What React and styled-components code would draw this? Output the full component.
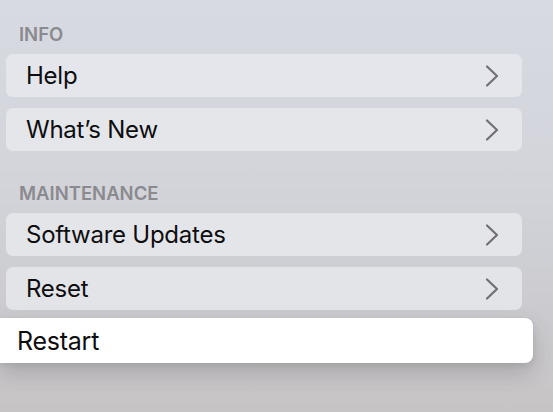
import React from "react";
import styled, { createGlobalStyle } from "styled-components";

const GlobalStyle = createGlobalStyle`
  html, body {
    margin: 0;
    padding: 0;
    height: 100%;
  }
  body {
    background: linear-gradient(180deg, #d7dae1 0%, #d2d4da 45%, #cbcbcf 75%, #c7c4c5 100%);
    font-family: Inter, "Liberation Sans", Arial, sans-serif;
    overflow: hidden;
  }
`;

const Page = styled.div`
  width: 553px;
  height: 412px;
  padding: 22px 31px 0 6px;
  box-sizing: border-box;
  display: flex;
  flex-direction: column;
`;

const Section = styled.section`
  display: flex;
  flex-direction: column;
  margin-bottom: ${(p) => p.$after || 0}px;
`;

const Header = styled.div`
  padding-left: 13px;
  height: 24px;
  line-height: 24px;
  margin-bottom: 8px;
  font-size: 18.5px;
  font-weight: 600;
  color: #8a8a8f;
`;

const List = styled.div`
  display: flex;
  flex-direction: column;
  gap: 11px;
`;

const Row = styled.div`
  display: flex;
  align-items: center;
  justify-content: space-between;
  height: 43px;
  padding: 0 22px 0 20px;
  border-radius: 7px;
  background: rgba(233, 234, 238, 0.8);
  color: #0e0e10;
  font-size: 24px;
  letter-spacing: -0.25px;
  box-sizing: border-box;

  ${(p) =>
    p.$focused &&
    `
    background: #ffffff;
    height: 45px;
    margin: -3px -11px 0 -6px;
    padding-left: 17px;
    font-size: 25px;
    border-radius: 0 8px 8px 0;
    box-shadow: 0 10px 22px rgba(60, 55, 60, 0.22), 0 2px 6px rgba(0, 0, 0, 0.08);
  `}
`;

const Chevron = () => (
  <svg width="16" height="24" viewBox="0 0 16 24" fill="none">
    <path
      d="M3 2.5 L13 12 L3 21.5"
      stroke="#6f6f75"
      strokeWidth="2.2"
      strokeLinecap="round"
      strokeLinejoin="round"
    />
  </svg>
);

const sections = [
  { title: "INFO", items: ["Help", "What’s New"] },
  { title: "MAINTENANCE", items: ["Software Updates", "Reset"] },
];

export default function App() {
  return (
    <>
      <GlobalStyle />
      <Page>
        <Section $after={30}>
          <Header>{sections[0].title}</Header>
          <List>
            {sections[0].items.map((t) => (
              <Row key={t}>
                {t}
                <Chevron />
              </Row>
            ))}
          </List>
        </Section>
        <Section>
          <Header>{sections[1].title}</Header>
          <List>
            {sections[1].items.map((t) => (
              <Row key={t}>
                {t}
                <Chevron />
              </Row>
            ))}
            <Row $focused>Restart</Row>
          </List>
        </Section>
      </Page>
    </>
  );
}
